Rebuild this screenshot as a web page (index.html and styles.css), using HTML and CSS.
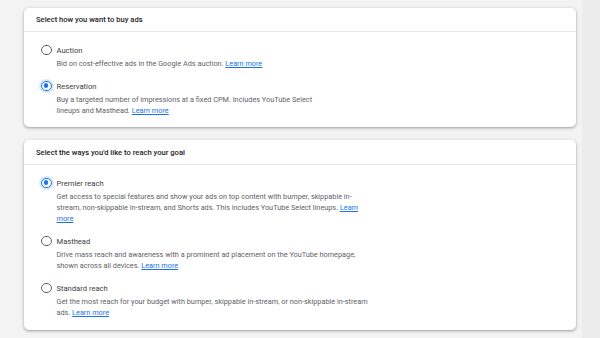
FILE: index.html
```html
<!DOCTYPE html>
<html>
<head>
<meta charset="utf-8">
<link rel="stylesheet" href="styles.css">
</head>
<body>
<div class="page">
  <main class="main">
    <section class="card">
      <div class="card-head">Select how you want to buy ads</div>
      <div class="card-body">
        <div class="option">
          <div class="opt-row"><span class="radio"></span><span class="label">Auction</span></div>
          <p class="desc narrow">Bid on cost-effective ads in the Google Ads auction. <a href="#">Learn more</a></p>
        </div>
        <div class="option">
          <div class="opt-row"><span class="radio checked"></span><span class="label">Reservation</span></div>
          <p class="desc narrow">Buy a targeted number of impressions at a fixed CPM. Includes YouTube Select lineups and Masthead. <a href="#">Learn more</a></p>
        </div>
      </div>
    </section>
    <section class="card">
      <div class="card-head tall">Select the ways you'd like to reach your goal</div>
      <div class="card-body last">
        <div class="option">
          <div class="opt-row"><span class="radio checked"></span><span class="label">Premier reach</span></div>
          <p class="desc">Get access to special features and show your ads on top content with bumper, skippable in-stream, non-skippable in-stream, and Shorts ads. This includes YouTube Select lineups. <a href="#">Learn more</a></p>
        </div>
        <div class="option">
          <div class="opt-row"><span class="radio"></span><span class="label">Masthead</span></div>
          <p class="desc">Drive mass reach and awareness with a prominent ad placement on the YouTube homepage, shown across all devices. <a href="#">Learn more</a></p>
        </div>
        <div class="option">
          <div class="opt-row"><span class="radio"></span><span class="label">Standard reach</span></div>
          <p class="desc">Get the most reach for your budget with bumper, skippable in-stream, or non-skippable in-stream ads. <a href="#">Learn more</a></p>
        </div>
      </div>
    </section>
  </main>
  <div class="side"></div>
</div>
</body>
</html>
```
FILE: styles.css
```css
* { box-sizing: border-box; }
html, body { margin: 0; padding: 0; }
body {
  font-family: Roboto, "Noto Sans", Arial, sans-serif;
  background: #f3f3f3;
  width: 600px;
  height: 338px;
  overflow: hidden;
}
.page {
  display: flex;
  height: 338px;
}
.main {
  width: 582px;
  padding: 8px 6px 0 24px;
  display: flex;
  flex-direction: column;
  gap: 13px;
}
.side {
  flex: 1;
  background: #ececec;
}
.card {
  background: #fff;
  border-radius: 5px;
  box-shadow: 0 1px 2px rgba(60,64,67,.3), 0 1px 3px 1px rgba(60,64,67,.15);
}
.card-head {
  height: 24px;
  line-height: 24px;
  padding-left: 12px;
  font-size: 7.6px;
  font-weight: 500;
  color: #202124;
  border-bottom: 1px solid #e8e8e8;
}
.card-head.tall {
  height: 25px;
  line-height: 25px;
}
.card-body {
  padding: 12px 12px 11px 17px;
  display: flex;
  flex-direction: column;
  gap: 11px;
}
.card-body.last { padding-bottom: 12px; }
.opt-row {
  display: flex;
  align-items: center;
  height: 12px;
}
.radio {
  width: 10.5px;
  height: 10.5px;
  border: 1.4px solid #5f6368;
  border-radius: 50%;
  margin-right: 5px;
  flex: none;
  position: relative;
}
.radio.checked {
  border-color: #1a73e8;
  box-shadow: 0 0 0 2px rgba(26,115,232,.16);
}
.radio.checked::after {
  content: "";
  position: absolute;
  left: 1.5px;
  top: 1.5px;
  width: 4.7px;
  height: 4.7px;
  border-radius: 50%;
  background: #1a73e8;
}
.label {
  font-size: 7.6px;
  color: #3c4043;
}
.desc {
  margin: 2px 0 0 15.5px;
  max-width: 318px;
  font-size: 7.3px;
  line-height: 11px;
  color: #5f6368;
}
.desc.narrow {
  max-width: 270px;
}
.desc a {
  color: #1a73e8;
  text-decoration: underline;
}
```
